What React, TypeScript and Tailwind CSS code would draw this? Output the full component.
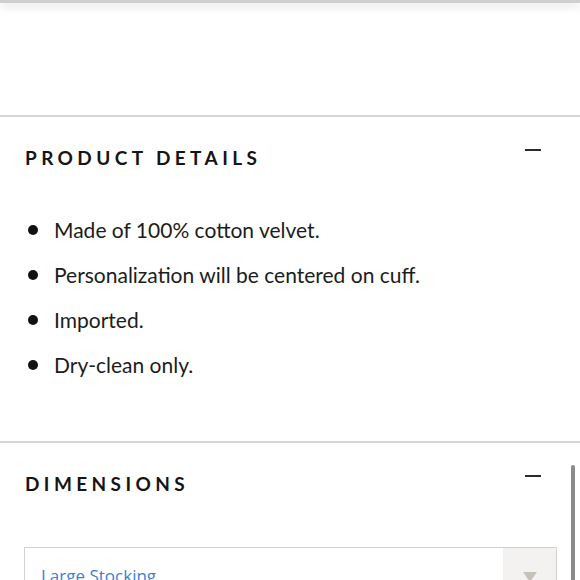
import React from 'react';

const details = [
  'Made of 100% cotton velvet.',
  'Personalization will be centered on cuff.',
  'Imported.',
  'Dry-clean only.',
];

function Minus() {
  return <span className="block h-[2px] w-[16px] bg-[#2b2b2b]" />;
}

function SectionHeader({ title }: { title: string }) {
  return (
    <div className="flex items-start justify-between pl-[25px] pr-[39px]">
      <h2 className="text-[19px] leading-[24px] font-bold tracking-[4.4px] text-[#151515] [font-family:Lato,sans-serif]">
        {title}
      </h2>
      <div className="mt-[3px]">
        <Minus />
      </div>
    </div>
  );
}

export default function App() {
  return (
    <div className="relative h-[580px] w-[580px] overflow-hidden bg-white">
      {/* top bar shadow */}
      <div className="h-[3px] bg-[#cfcfcf] shadow-[0_3px_9px_rgba(0,0,0,0.18)]" />

      <div className="h-[112px]" />

      <section className="border-t-2 border-[#d6d6d6] pt-[29px] pb-[54px]">
        <SectionHeader title="PRODUCT DETAILS" />
        <ul className="mt-[37px] pl-[28px] [font-family:Lato,sans-serif]">
          {details.map((d) => (
            <li key={d} className="flex h-[45px] items-center text-[21px] text-[#1c1c1c]">
              <span className="mr-[16px] h-[10px] w-[10px] rounded-full bg-[#111]" />
              {d}
            </li>
          ))}
        </ul>
      </section>

      <section className="border-t-2 border-[#d6d6d6] pt-[29px]">
        <SectionHeader title="DIMENSIONS" />
        <div className="mt-[51px] ml-[24px] flex h-[60px] w-[533px] border border-[#d2d2d2]">
          <div className="flex-1 pl-[16px] pt-[15px] text-[17px] text-[#3a7fd3] [font-family:'Open_Sans',sans-serif]">
            Large Stocking
          </div>
          <div className="flex w-[53px] justify-center bg-[#f3f2f0] pt-[24px]">
            <svg width="14" height="10" viewBox="0 0 14 10">
              <path d="M0 0 L14 0 L7 10 Z" fill="#c6c2ba" />
            </svg>
          </div>
        </div>
      </section>

      {/* scrollbar */}
      <div className="absolute top-[465px] right-[5px] h-[140px] w-[4px] rounded-full bg-[#8b8b8b]" />
    </div>
  );
}
